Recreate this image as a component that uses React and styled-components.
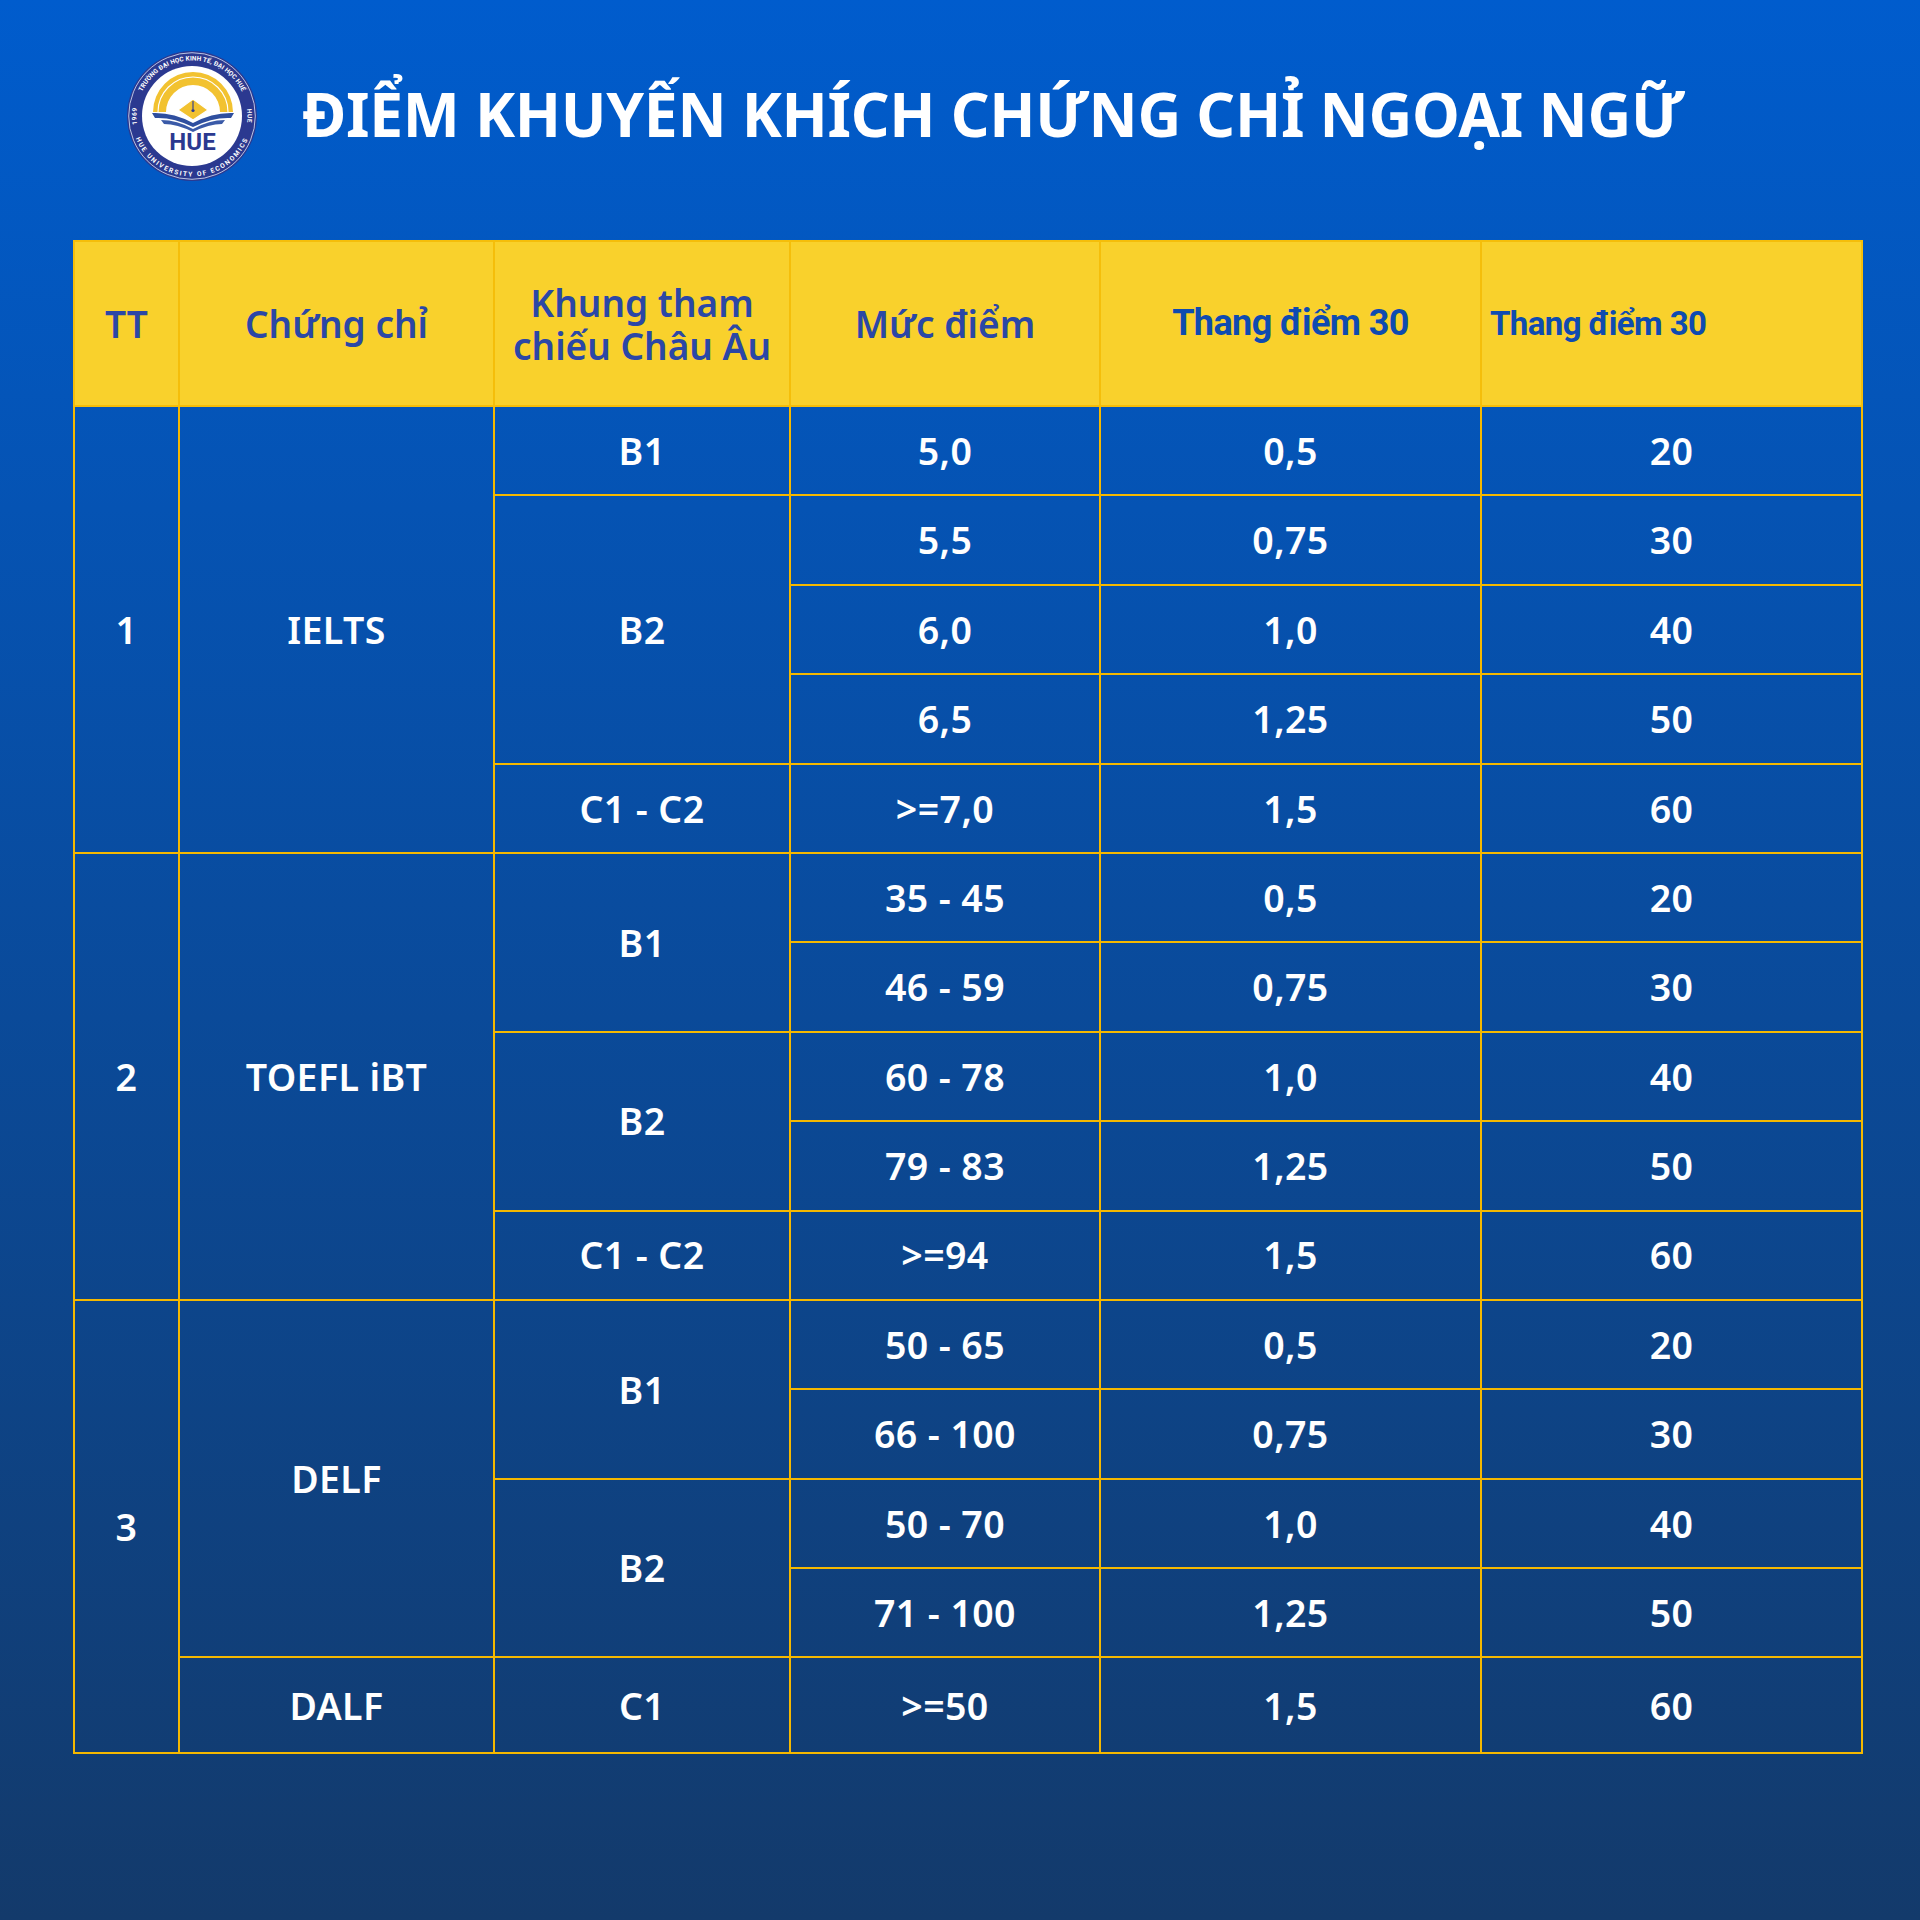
import React from "react";
import styled, { createGlobalStyle } from "styled-components";

const Global = createGlobalStyle`
  html, body { margin: 0; padding: 0; }
  body { background: #13396a; }
  * { box-sizing: border-box; }
`;

const Page = styled.div`
  width: 1920px;
  height: 1920px;
  background: linear-gradient(180deg, #005ccd 0%, #133a6b 100%);
  padding: 51px 59px 0 73px;
  font-family: "Noto Sans", "Open Sans", sans-serif;
`;

const Header = styled.header`
  display: flex;
  align-items: center;
  gap: 45px;
  padding-left: 54px;
  height: 130px;
`;

const Title = styled.h1`
  margin: -4px 0 0 0;
  color: #ffffff;
  font-family: "Noto Sans", sans-serif;
  font-weight: 700;
  font-size: 60.5px;
  line-height: 1;
  letter-spacing: -0.3px;
`;

const Table = styled.table`
  margin-top: 59px;
  width: 1788px;
  border-collapse: collapse;
  table-layout: fixed;
  border: 2px solid #f5b800;
`;

const HeadRow = styled.tr`
  height: 165px;
  background: #f9d12c;
`;

const Th = styled.th`
  border: 2px solid #f5be0a;
  padding: 0 8px;
  color: ${(p) => (p.$alt ? "#0f4bb0" : "#2b47a6")};
  font-family: ${(p) => (p.$alt ? "Roboto, sans-serif" : '"Noto Sans", sans-serif')};
  font-weight: ${(p) => (p.$alt ? 700 : 600)};
  font-size: ${(p) => p.$size || 37}px;
  line-height: 43px;
  text-align: ${(p) => p.$align || "center"};
  letter-spacing: ${(p) => (p.$alt ? "-0.6px" : "0")};
  vertical-align: middle;
`;

const Row = styled.tr`
  height: ${(p) => (p.$last ? 96 : 89.4)}px;
`;

const Td = styled.td`
  border: 2px solid #f5b800;
  padding: 0 6px;
  color: #ffffff;
  font-family: "Noto Sans", sans-serif;
  font-weight: 600;
  font-size: 37.5px;
  letter-spacing: 0.4px;
  line-height: 1;
  text-align: center;
  vertical-align: middle;
`;

const widths = [105, 315, 296, 310, 381, 381];

const data = [
  [{ t: "1", rs: 5 }, { t: "IELTS", rs: 5 }, { t: "B1" }, "5,0", "0,5", "20"],
  [{ t: "B2", rs: 3 }, "5,5", "0,75", "30"],
  ["6,0", "1,0", "40"],
  ["6,5", "1,25", "50"],
  [{ t: "C1 - C2" }, ">=7,0", "1,5", "60"],
  [{ t: "2", rs: 5 }, { t: "TOEFL iBT", rs: 5 }, { t: "B1", rs: 2 }, "35 - 45", "0,5", "20"],
  ["46 - 59", "0,75", "30"],
  [{ t: "B2", rs: 2 }, "60 - 78", "1,0", "40"],
  ["79 - 83", "1,25", "50"],
  [{ t: "C1 - C2" }, ">=94", "1,5", "60"],
  [{ t: "3", rs: 5 }, { t: "DELF", rs: 4 }, { t: "B1", rs: 2 }, "50 - 65", "0,5", "20"],
  ["66 - 100", "0,75", "30"],
  [{ t: "B2", rs: 2 }, "50 - 70", "1,0", "40"],
  ["71 - 100", "1,25", "50"],
  [{ t: "DALF" }, { t: "C1" }, ">=50", "1,5", "60"],
];

const NAVY = "#2b3990";

function Logo() {
  const cx = 65;
  const cy = 65;
  const rTop = 55.5;
  const rBot = 60.5;
  const cw = `M ${cx} ${cy + rTop} A ${rTop} ${rTop} 0 1 1 ${cx} ${cy - rTop} A ${rTop} ${rTop} 0 1 1 ${cx} ${cy + rTop}`;
  const ccw = `M ${cx} ${cy - rBot} A ${rBot} ${rBot} 0 1 0 ${cx} ${cy + rBot} A ${rBot} ${rBot} 0 1 0 ${cx} ${cy - rBot}`;
  const ringText = {
    fill: "#fff",
    fontFamily: "Roboto, sans-serif",
    fontWeight: 700,
    textAnchor: "middle",
  };
  return (
    <svg width="130" height="130" viewBox="0 0 130 130">
      <defs>
        <path id="cwPath" d={cw} />
        <path id="ccwPath" d={ccw} />
      </defs>
      <circle cx={cx} cy={cy} r="65" fill={NAVY} />
      <circle cx={cx} cy={cy} r="63.3" fill="none" stroke="#dfe6f5" strokeWidth="0.8" />
      <circle cx={cx} cy={cy} r="50" fill="#fff" />
      <text {...ringText} fontSize="6.4" letterSpacing="0.1">
        <textPath href="#cwPath" startOffset="50%">TRƯỜNG ĐẠI HỌC KINH TẾ, ĐẠI HỌC HUẾ</textPath>
      </text>
      <text {...ringText} fontSize="6.4" letterSpacing="0.6">
        <textPath href="#cwPath" startOffset="25%">1969</textPath>
      </text>
      <text {...ringText} fontSize="6.4" letterSpacing="0.6">
        <textPath href="#cwPath" startOffset="75%">HUE</textPath>
      </text>
      <text {...ringText} fontSize="6.6" letterSpacing="1.6">
        <textPath href="#ccwPath" startOffset="50%">HUE UNIVERSITY OF ECONOMICS</textPath>
      </text>
      {/* yellow arch */}
      <path d="M 26 61 A 40 40 0 0 1 106 61 L 93 61 A 27 27 0 0 0 39 61 Z" fill="#f2c230" />
      <path d="M 31 61 A 35 35 0 0 1 101 61" fill="none" stroke="#fff" strokeWidth="1.1" />
      {/* pen nib */}
      <path d="M 66 48 L 81 59 L 66 69 L 51 59 Z" fill="#f2c230" stroke="#fff" strokeWidth="1.2" />
      <line x1="66" y1="50" x2="66" y2="58" stroke={NAVY} strokeWidth="1.1" />
      <circle cx="66" cy="59.5" r="1.6" fill={NAVY} />
      {/* wings */}
      <path d="M 25 62 Q 46 61 66 72 Q 86 61 107 62 L 104 67 Q 86 66 66 76 Q 46 66 28 67 Z" fill="#2f4f9f" />
      <path d="M 34 69 Q 50 69 66 78 Q 82 69 98 69 L 95 73 Q 82 73 66 81 Q 50 73 37 73 Z" fill="#3a5aa8" />
      <text x="65.5" y="99" textAnchor="middle" fill={NAVY} fontFamily="Roboto, sans-serif" fontWeight="700" fontSize="24">
        HUE
      </text>
    </svg>
  );
}

export default function App() {
  return (
    <Page>
      <Global />
      <Header>
        <Logo />
        <Title>ĐIỂM KHUYẾN KHÍCH CHỨNG CHỈ NGOẠI NGỮ</Title>
      </Header>
      <Table>
        <colgroup>
          {widths.map((w, i) => (
            <col key={i} style={{ width: w }} />
          ))}
        </colgroup>
        <thead>
          <HeadRow>
            <Th>TT</Th>
            <Th>Chứng chỉ</Th>
            <Th>
              Khung tham
              <br />
              chiếu Châu Âu
            </Th>
            <Th>Mức điểm</Th>
            <Th $alt $size={36}>Thang điểm 30</Th>
            <Th $alt $size={33} $align="left">Thang điểm 30</Th>
          </HeadRow>
        </thead>
        <tbody>
          {data.map((row, i) => (
            <Row key={i} $last={i === data.length - 1}>
              {row.map((c, j) =>
                typeof c === "string" ? (
                  <Td key={j}>{c}</Td>
                ) : (
                  <Td key={j} rowSpan={c.rs || 1}>
                    {c.t}
                  </Td>
                )
              )}
            </Row>
          ))}
        </tbody>
      </Table>
    </Page>
  );
}
